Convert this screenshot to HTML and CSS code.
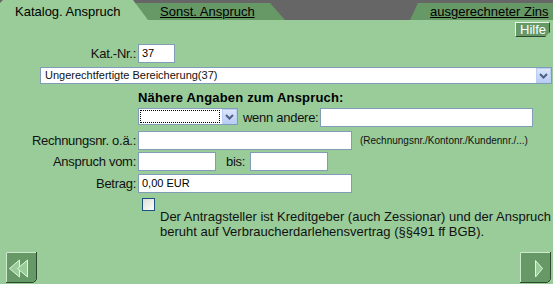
FILE: index.html
```html
<!DOCTYPE html>
<html lang="de">
<head>
<meta charset="utf-8">
<title>Katalog. Anspruch</title>
<link rel="stylesheet" href="styles.css">
</head>
<body>
<div class="page">
  <div class="tabs">
    <div class="tab tab-active">Katalog. Anspruch</div>
    <a class="tab tab-second" href="#">Sonst. Anspruch</a>
    <div class="tab-gap"></div>
    <a class="tab tab-third" href="#">ausgerechneter Zins</a>
  </div>

  <div class="help-row"><span class="help">Hilfe</span></div>

  <div class="row row-kat">
    <span class="lbl">Kat.-Nr.:</span>
    <span class="input w-kat">37</span>
  </div>

  <div class="row row-select">
    <div class="select select-wide">
      <span class="select-text">Ungerechtfertigte Bereicherung(37)</span>
      <span class="select-arrow"><svg width="9" height="6" viewBox="0 0 9 6"><path d="M1 1 L4.5 4.5 L8 1" fill="none" stroke="#4d6185" stroke-width="2"/></svg></span>
    </div>
  </div>

  <div class="heading">Nähere Angaben zum Anspruch:</div>

  <div class="row row-wenn">
    <div class="select select-small">
      <span class="select-text"><span class="focus"></span></span>
      <span class="select-arrow"><svg width="9" height="6" viewBox="0 0 9 6"><path d="M1 1 L4.5 4.5 L8 1" fill="none" stroke="#4d6185" stroke-width="2"/></svg></span>
    </div>
    <span class="txt wenn">wenn andere:</span>
    <span class="input w-andere"></span>
  </div>

  <div class="row row-rech">
    <span class="lbl">Rechnungsnr. o.ä.:</span>
    <span class="input w-long"></span>
    <span class="hint">(Rechnungsnr./Kontonr./Kundennr./...)</span>
  </div>

  <div class="row row-vom">
    <span class="lbl">Anspruch vom:</span>
    <span class="input w-date"></span>
    <span class="txt bis">bis:</span>
    <span class="input w-date"></span>
  </div>

  <div class="row row-betrag">
    <span class="lbl">Betrag:</span>
    <span class="input w-long">0,00 EUR</span>
  </div>

  <div class="check-row"><span class="checkbox"></span></div>
  <p class="note">Der Antragsteller ist Kreditgeber (auch Zessionar) und der Anspruch<br>beruht auf Verbraucherdarlehensvertrag (§§491 ff BGB).</p>

  <div class="footer">
    <span class="nav nav-back">
      <svg width="31" height="31" viewBox="0 0 31 31">
        <rect x="0" y="0" width="30" height="30" fill="#669966"/>
        <path d="M0.5 30 V0.5 H30" fill="none" stroke="#cfe9cf" stroke-width="1"/>
        <path d="M30.5 0 V27.5 L27.5 30.5 H0" fill="none" stroke="#2e4a2e" stroke-width="1"/>
        <path d="M3.5 16.5 L13.5 8 V25 Z" fill="#99cc99" stroke="#e4f4e4" stroke-width="1"/>
        <path d="M11.5 16.5 L21.5 8 V25 Z" fill="#99cc99" stroke="#e4f4e4" stroke-width="1"/>
      </svg>
    </span>
    <span class="nav nav-next">
      <svg width="31" height="31" viewBox="0 0 31 31">
        <rect x="0" y="0" width="30" height="30" fill="#669966"/>
        <path d="M0.5 30 V0.5 H30" fill="none" stroke="#cfe9cf" stroke-width="1"/>
        <path d="M30.5 0 V27.5 L27.5 30.5 H0" fill="none" stroke="#2e4a2e" stroke-width="1"/>
        <path d="M15.5 8.5 V25 L22.5 16.5 Z" fill="#99cc99" stroke="#e4f4e4" stroke-width="1"/>
      </svg>
    </span>
  </div>
</div>
</body>
</html>
```

FILE: styles.css
```css
html, body {
  margin: 0;
  padding: 0;
  background: #99cc99;
}

.page {
  width: 553px;
  height: 284px;
  display: flex;
  flex-direction: column;
  font-family: "Liberation Sans", Arial, sans-serif;
  font-size: 13px;
  color: #111;
  background: #99cc99;
  overflow: hidden;
}

/* Tabs */
.tabs {
  display: flex;
  height: 20px;
  background: #666666;
  flex: none;
}

.tab {
  display: block;
  height: 20px;
  box-sizing: border-box;
  padding-top: 4px;
  line-height: 15px;
  font-size: 13px;
  color: #000;
  white-space: nowrap;
  flex: none;
}

.tab-active {
  width: 148px;
  padding-left: 15px;
  background: #99cc99;
  clip-path: polygon(0 3px, 3px 0, 133px 0, 148px 20px, 0 20px);
  position: relative;
  z-index: 1;
}

.tab-second {
  width: 149px;
  margin-left: -12px;
  padding-left: 24px;
  background: #669966;
  text-decoration: underline;
  clip-path: polygon(0 3px, 134px 3px, 149px 20px, 0 20px);
}

.tab-gap {
  flex: 1;
}

.tab-third {
  width: 143px;
  padding-left: 20px;
  background: #669966;
  text-decoration: underline;
  clip-path: polygon(0 20px, 8px 3px, 100% 3px, 100% 20px);
}

/* Help */
.help-row {
  display: flex;
  justify-content: flex-end;
  margin-top: 2px;
  padding-right: 3px;
  height: 15px;
}

.help {
  width: 35px;
  height: 15px;
  box-sizing: border-box;
  background: #669966;
  color: #fff;
  font-size: 13px;
  line-height: 13px;
  padding-left: 4px;
  border-top: 1px solid #e6f5e6;
  border-left: 1px solid #e6f5e6;
  border-right: 1px solid #2e4a2e;
  border-bottom: 1px solid #2e4a2e;
  clip-path: polygon(0 0, 100% 0, 100% 10px, 30px 100%, 0 100%);
}

/* Rows */
.row {
  display: flex;
  align-items: center;
  flex: none;
}

.lbl {
  width: 136px;
  text-align: right;
  margin-right: 2px;
  white-space: nowrap;
  letter-spacing: -0.28px;
  flex: none;
}

.txt {
  white-space: nowrap;
  letter-spacing: -0.28px;
}

.input {
  display: block;
  height: 19px;
  box-sizing: border-box;
  background: #fff;
  border: 1px solid #7f9db9;
  font-size: 11px;
  line-height: 17px;
  padding-left: 3px;
  color: #000;
  flex: none;
}

.w-kat { width: 37px; }
.w-andere { width: 213px; }
.w-long { width: 214px; }
.w-date { width: 78px; }

.row-kat { margin-top: 7px; }

.row-select {
  margin-top: 4px;
  padding-left: 40px;
}

.select {
  display: flex;
  height: 17px;
  box-sizing: border-box;
  background: #fff;
  border: 1px solid #7f9db9;
  flex: none;
}

.select-wide { width: 512px; }
.select-small { width: 100px; }

.select-text {
  flex: 1;
  font-size: 11px;
  line-height: 15px;
  padding-left: 4px;
  white-space: nowrap;
  display: flex;
  align-items: center;
}

.select-arrow {
  width: 15px;
  box-sizing: border-box;
  background: linear-gradient(#dce6fb, #b9cdf6);
  border: 1px solid #b9ccf2;
  display: flex;
  align-items: center;
  justify-content: center;
}

.focus {
  display: block;
  width: 80px;
  height: 13px;
  margin-left: -3px;
  box-sizing: border-box;
  border: 1px dotted #000;
}

.heading {
  margin-top: 6px;
  padding-left: 138px;
  font-weight: bold;
  font-size: 13px;
  line-height: 15px;
  letter-spacing: 0.18px;
  color: #000;
  flex: none;
}

.row-wenn {
  margin-top: 3px;
  padding-left: 138px;
  align-items: flex-start;
}

.wenn {
  width: 82px;
  padding-left: 5px;
  box-sizing: border-box;
  line-height: 19px;
  flex: none;
}

.row-rech { margin-top: 4px; }

.hint {
  margin-left: 8px;
  font-size: 10px;
  white-space: nowrap;
}

.row-vom { margin-top: 2px; }

.bis {
  margin-left: 10px;
  width: 24px;
  flex: none;
}

.row-betrag { margin-top: 3px; }

.check-row {
  margin-top: 5px;
  padding-left: 142px;
  height: 13px;
  flex: none;
}

.checkbox {
  display: block;
  width: 13px;
  height: 13px;
  box-sizing: border-box;
  border: 1px solid #1c5180;
  background: linear-gradient(135deg, #dcdcd7, #ffffff);
}

.note {
  margin: -2px 0 0 0;
  padding-left: 160px;
  font-size: 13px;
  line-height: 15px;
  white-space: nowrap;
  flex: none;
}

/* Footer navigation */
.footer {
  margin-top: auto;
  display: flex;
  justify-content: space-between;
  padding: 0 2px 1px 6px;
  flex: none;
}

.nav {
  display: block;
  width: 31px;
  height: 31px;
}

.nav svg {
  display: block;
}
```
